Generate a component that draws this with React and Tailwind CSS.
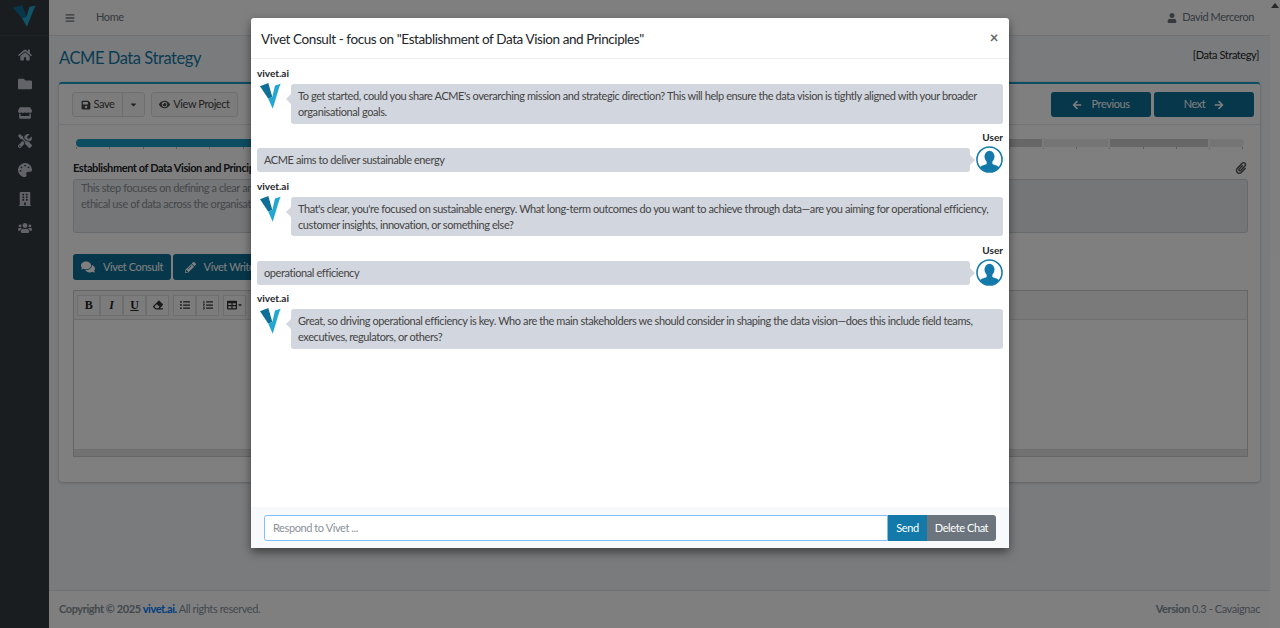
import React from "react";
import {
  FaHome, FaFolder, FaStore, FaTools, FaPalette, FaBuilding, FaUsers, FaBars, FaUser, FaSave, FaEye,
  FaArrowLeft, FaArrowRight, FaPaperclip, FaComments, FaPencilAlt, FaEraser,
  FaListUl, FaListOl, FaTable, FaCaretDown,
} from "react-icons/fa";

const Logo = ({ className }) => (
  <svg viewBox="0 0 21 26" preserveAspectRatio="none" className={className}>
    <polygon points="0,3.300 8.300,0 12.300,14 8.300,15.700" fill="#106f96" />
    <polygon points="15,2.500 20.700,0.700 19.300,4 12.700,25.700 8.300,15.700 12.300,14" fill="#22a7d3" />
  </svg>
);

const Avatar = () => (
  <svg viewBox="0 0 28 28" className="w-[27px] h-[27px] shrink-0">
    <defs>
      <clipPath id="c">
        <circle cx="14" cy="14" r="12.6" />
      </clipPath>
    </defs>
    <circle cx="14" cy="14" r="13" fill="#fff" stroke="#1279a8" strokeWidth="1.6" />
    <g clipPath="url(#c)" fill="#1279a8">
      <ellipse cx="14" cy="11" rx="5.2" ry="6.2" />
      <path d="M11 15.5h6v3.2c2.5 1.2 6.5 1.8 7.5 4.3V28h-21v-5c1-2.500 5-3.100 7.500-4.300z" />
    </g>
  </svg>
);

const Bubble = ({ side, children, className }) => (
  <div className={`relative min-w-0 bg-[#d2d6de] rounded-[3px] text-[#444] ${className}`}>
    {side === "left" && (
      <span className="absolute left-[-5px] top-[10px] w-0 h-0 border-y-[5px] border-y-transparent border-r-[5px] border-r-[#d2d6de]" />
    )}
    {side === "right" && (
      <span className="absolute right-[-5px] top-[7px] w-0 h-0 border-y-[5px] border-y-transparent border-l-[5px] border-l-[#d2d6de]" />
    )}
    {children}
  </div>
);

const BotMsg = ({ lines, mb }) => (
  <div className={mb}>
    <div className="font-bold text-[10px] tracking-normal leading-[11px] text-[#212529] h-[11px]">vivet.ai</div>
    <div className="flex mt-[5px]">
      <Logo className="w-[21px] h-[26px] ml-[3px] mt-[-1px] shrink-0" />
      <Bubble side="left" className="ml-[10px] flex-1 px-[7px] py-[4px] leading-[16px] h-[39.500px] whitespace-nowrap">
        {lines.map((l) => (
          <div key={l}>{l}</div>
        ))}
      </Bubble>
    </div>
  </div>
);

const UserMsg = ({ text, mb }) => (
  <div className={mb}>
    <div className="font-bold text-[10px] tracking-normal leading-[11px] text-[#212529] text-right h-[11px]">User</div>
    <div className="flex items-start h-[26px] mt-[3px]">
      <Bubble side="right" className="flex-1 h-[24px] mt-[2px] px-[7px] leading-[23px] mr-[6px]">{text}</Bubble>
      <Avatar />
    </div>
  </div>
);

const ToolBtn = ({ children, cls = "" }) => (
  <span className={`w-[23px] h-[21px] bg-[#f8f9fa] border border-[#ddd] flex items-center justify-center text-[#333] text-[10px] ${cls}`}>{children}</span>
);

const Glyph = ({ children, cls }) => (
  <span className={`text-[12px] leading-none text-[#222] ${cls}`} style={{ fontFamily: '"Liberation Serif", serif' }}>{children}</span>
);

const ticks = Array.from({ length: 36 }, (_, i) => i);

export default function App() {
  return (
    <div className="relative w-[1280px] h-[628px] overflow-hidden flex text-[11px] tracking-[-0.41px] text-[#212529] bg-[#f4f6f9]" style={{ fontFamily: 'Lato, sans-serif' }}>
      <aside className="w-[49px] shrink-0 bg-[#343a40] flex flex-col items-center">
        <div className="h-[36px] w-full flex items-center justify-center border-b border-[#4b545c]/40">
          <Logo className="w-[23px] h-[22px] mt-[-4px]" />
        </div>
        <nav className="flex flex-col items-center text-[#c2c7d0] text-[14px] gap-[14.800px] mt-[12px]">
          <FaHome />
          <FaFolder />
          <FaStore />
          <FaTools />
          <FaPalette />
          <FaBuilding />
          <FaUsers />
        </nav>
      </aside>

      <div className="flex-1 flex flex-col min-w-0">
        <header className="h-[36px] shrink-0 bg-white border-b border-[#dee2e6] flex items-center text-[#6c757d] pl-[16px] pr-[16px]">
          <FaBars className="text-[10px]" />
          <span className="ml-[21px]">Home</span>
          <span className="ml-auto flex items-center gap-[5px]"><FaUser className="text-[10px]" />David Merceron</span>
        </header>

        <main className="flex-1 min-h-0 px-[10px] flex flex-col">
          <div className="flex justify-between items-center h-[46px] shrink-0">
            <h1 className="text-[16.500px] tracking-[-0.44px] text-[#1279a8] mt-[-2px]">ACME Data Strategy</h1>
            <span className="mt-[-7px] mr-[1px]">[Data Strategy]</span>
          </div>
          <section className="h-[400px] shrink-0 bg-white border-t-[2px] border-[#1a9bc4] shadow-[0_0_1px_rgba(0,0,0,.2),0_1px_3px_rgba(0,0,0,.2)] rounded-[3px] flex flex-col">
            <div className="h-[41px] shrink-0 border-b border-[#e3e6ea] flex items-center px-[13px]">
              <div className="flex text-[#444] h-[25px] bg-[#f8f9fa] border border-[#ddd] rounded-[3px]">
                <span className="w-[50px] pt-[1px] flex items-center justify-center gap-[3px] border-r border-[#ddd]"><FaSave className="text-[10px]" />Save</span>
                <span className="w-[21px] flex items-center justify-center text-[9px]"><FaCaretDown /></span>
              </div>
              <span className="ml-[6px] pt-[1px] h-[25px] w-[87px] flex items-center justify-center gap-[3px] text-[#444] bg-[#f8f9fa] border border-[#ddd] rounded-[3px]"><FaEye className="text-[11px]" />View Project</span>
              <div className="ml-auto flex gap-[3px] mr-[-7px] text-white">
                <span className="w-[100px] pt-[1px] h-[25px] bg-[#0e6f96] rounded-[3px] flex items-center justify-center gap-[9px]"><FaArrowLeft className="text-[10px]" />Previous</span>
                <span className="w-[100px] pt-[1px] h-[25px] bg-[#0e6f96] rounded-[3px] flex items-center justify-center gap-[9px]">Next<FaArrowRight className="text-[10px]" /></span>
              </div>
            </div>
            <div className="flex-1 pl-[14px] pr-[12px] pt-[14px]">
              <div className="relative ml-[3px] mr-[4px] h-[10px]">
                <div className="h-[8px] rounded-full bg-[#eaeaea] overflow-hidden flex">
                  <div className="w-[600px] bg-[#1a9bc4]" />
                  <div className="w-[367px] bg-[#cfcfcf]" />
                  <div className="w-[66px] bg-[#eaeaea]" />
                  <div className="w-[100px] bg-[#cfcfcf]" />
                  <div className="w-[34px] bg-[#eaeaea]" />
                </div>
                <div className="absolute left-0 right-0 top-[8px] flex justify-between">
                  {ticks.map((t) => (
                    <span key={t} className="w-px h-[2px] bg-[#bbb]" />
                  ))}
                </div>
                <span className="absolute left-[966px] top-[-1px] w-[2px] h-[10px] bg-[#f4f4f4]" />
                <span className="absolute left-[1032px] top-[-1px] w-[2px] h-[10px] bg-[#f4f4f4]" />
                <span className="absolute left-[1132px] top-[-1px] w-[2px] h-[10px] bg-[#f4f4f4]" />
              </div>
              <div className="flex justify-between items-center mt-[12px] h-[14px]">
                <span className="font-bold">Establishment of Data Vision and Principles</span>
                <FaPaperclip className="text-[12px] text-[#555] mr-[1px]" />
              </div>
              <div className="mt-[4px] h-[54px] border border-[#ced4da] rounded-[3px] bg-[#e9ecef] text-[#8a9096] px-[7px] leading-[16px] whitespace-nowrap overflow-hidden">
                <div>This step focuses on defining a clear and compelling data vision and establishing the guiding principles that will govern all data activities, ensuring consistency, transparency, and</div>
                <div>ethical use of data across the organisation.</div>
              </div>
              <div className="flex gap-[2px] mt-[21px] text-white">
                <span className="w-[98px] h-[26px] bg-[#0e6f96] rounded-[3px] flex items-center justify-center gap-[8px]"><FaComments className="text-[14px]" />Vivet Consult</span>
                <span className="w-[98px] h-[26px] bg-[#0e6f96] rounded-[3px] flex items-center justify-center gap-[8px] pr-[5px]"><FaPencilAlt className="text-[11px]" />Vivet Write</span>
              </div>
              <div className="mt-[10px] h-[167px] border border-[#ccc] flex flex-col bg-white">
                <div className="h-[29px] shrink-0 bg-[#f5f5f5] border-b border-[#ddd] flex items-center px-[3px]">
                  <div className="flex">
                    <ToolBtn><Glyph cls="font-bold">B</Glyph></ToolBtn>
                    <ToolBtn><Glyph cls="font-bold italic">I</Glyph></ToolBtn>
                    <ToolBtn><Glyph cls="font-bold underline">U</Glyph></ToolBtn>
                    <ToolBtn><FaEraser /></ToolBtn>
                  </div>
                  <div className="flex ml-[4px]">
                    <ToolBtn><FaListUl /></ToolBtn>
                    <ToolBtn><FaListOl /></ToolBtn>
                  </div>
                  <div className="flex ml-[4px]">
                    <ToolBtn><FaTable /><FaCaretDown className="text-[6px]" /></ToolBtn>
                  </div>
                </div>
                <div className="flex-1" />
                <div className="h-[7px] shrink-0 bg-[#e4e4e4] border-t border-[#ddd]" />
              </div>
            </div>
          </section>
          <div className="flex-1" />
        </main>

        <footer className="h-[38px] shrink-0 bg-white border-t border-[#dee2e6] flex items-center justify-between px-[10px] text-[#869099]">
          <span><b>Copyright © 2025 <span className="text-[#007bff]">vivet.ai.</span></b> All rights reserved.</span>
          <span><b>Version</b> 0.3 - Cavaignac</span>
        </footer>
      </div>

      <div className="w-[10px] shrink-0 bg-white flex justify-center pt-[3px]">
        <span className="w-0 h-0 border-x-[4px] border-x-transparent border-b-[5px] border-b-[#505050]" />
      </div>

      <div className="absolute inset-0 bg-black/50" />
      <div className="absolute left-[251px] top-[18px] w-[758px] h-[530px] bg-white rounded-[3px] shadow-[0_4px_10px_rgba(0,0,0,.5)] flex flex-col">
        <div className="h-[41px] shrink-0 border-b border-[#eee] flex items-center justify-between pl-[10px] pr-[11px]">
          <h5 className="text-[13.500px] text-[#212529] mt-[2px]">Vivet Consult - focus on "Establishment of Data Vision and Principles"</h5>
          <span className="text-[#666] text-[15px] font-bold mt-[-2px]">×</span>
        </div>
        <div className="flex-1 min-h-0 px-[6px] pt-[9px] flex flex-col">
          <BotMsg mb="mb-[8.500px]" lines={["To get started, could you share ACME's overarching mission and strategic direction? This will help ensure the data vision is tightly aligned with your broader", "organisational goals."]} />
          <UserMsg mb="mb-[8.500px]" text="ACME aims to deliver sustainable energy" />
          <BotMsg mb="mb-[8.500px]" lines={["That's clear, you're focused on sustainable energy. What long-term outcomes do you want to achieve through data—are you aiming for operational efficiency,", "customer insights, innovation, or something else?"]} />
          <UserMsg mb="mb-[8.500px]" text="operational efficiency" />
          <BotMsg lines={["Great, so driving operational efficiency is key. Who are the main stakeholders we should consider in shaping the data vision—does this include field teams,", "executives, regulators, or others?"]} />
        </div>
        <div className="h-[41px] shrink-0 bg-[#f8f9fa] flex items-center px-[13px]">
          <div className="flex-1 h-[26px] bg-white border border-[#80bdff] rounded-l-[3px] flex items-center px-[8px] pt-[1px] text-[#8a9199]">Respond to Vivet ...</div>
          <span className="w-[39px] h-[26px] pt-[1px] bg-[#1279a8] text-white flex items-center justify-center">Send</span>
          <span className="w-[69px] h-[26px] pt-[1px] bg-[#6c757d] text-white flex items-center justify-center rounded-r-[3px]">Delete Chat</span>
        </div>
      </div>
    </div>
  );
}
